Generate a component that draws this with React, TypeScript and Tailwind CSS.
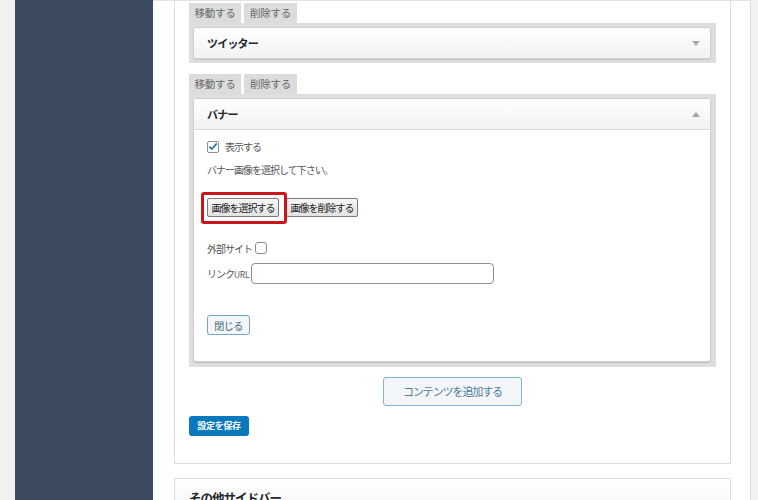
import React from "react";

const font = { fontFamily: '"Noto Sans CJK JP", "Noto Sans", sans-serif' };

function Tabs() {
  return (
    <div className="flex h-[20px] gap-[3px]">
      <div className="w-[52px] bg-[#dcdcdc] text-[10.5px] tracking-[-0.3px] text-[#666] flex items-center justify-center">移動する</div>
      <div className="w-[53px] bg-[#dcdcdc] text-[10.5px] tracking-[-0.3px] text-[#666] flex items-center justify-center">削除する</div>
    </div>
  );
}

function Arrow({ up }: { up?: boolean }) {
  return (
    <svg width="8" height="5" viewBox="0 0 8 5" className="mr-[10px]">
      {up ? <polygon points="0,5 8,5 4,0" fill="#a7a7a7" /> : <polygon points="0,0 8,0 4,5" fill="#a7a7a7" />}
    </svg>
  );
}

export default function App() {
  return (
    <div className="w-[758px] h-[500px] flex overflow-hidden bg-[#f1f1f1]" style={font}>
      <div className="w-[15px] shrink-0" />
      <div className="w-[138px] shrink-0 bg-[#3b4a5f]" />
      <div className="w-[598px] shrink-0 bg-white border-t border-[#e2e2e2] border-r pl-[21px]">
        <div className="w-[557px] border-x border-b border-[#dcdcdc] px-[14px] pt-[2px] pb-[27px] flex flex-col">
          {/* Twitter widget */}
          <Tabs />
          <div className="bg-[#dedede] pt-[4px] pb-[4px] pl-[4px] pr-[5px]">
            <div className="h-[32px] rounded-[3px] border border-[#cfcfcf] bg-gradient-to-b from-white to-[#f2f2f2] shadow-[0_1px_1px_rgba(0,0,0,0.12)] flex items-center justify-between pl-[13px]">
              <span className="text-[11px] tracking-[-0.8px] font-bold text-[#23282d]">ツイッター</span>
              <Arrow />
            </div>
          </div>

          {/* Banner widget */}
          <div className="mt-[11px]">
            <Tabs />
          </div>
          <div className="bg-[#dedede] pt-[4px] pb-[5px] pl-[4px] pr-[5px]">
            <div className="rounded-[3px] border border-[#cfcfcf] bg-white shadow-[0_1px_1px_rgba(0,0,0,0.15)] flex flex-col">
              <div className="h-[31px] bg-gradient-to-b from-white to-[#f2f2f2] border-b border-[#dcdcdc] flex items-center justify-between pl-[13px]">
                <span className="text-[11px] tracking-[-0.8px] font-bold text-[#23282d]">バナー</span>
                <Arrow up />
              </div>
              <div className="px-[13px] pb-[26px] flex flex-col items-start text-[10px] tracking-[-1px] text-[#555]">
                <div className="mt-[10px] h-[13px] flex items-center gap-[6px]">
                  <span className="w-[12px] h-[12px] border border-[#8c8f94] rounded-[2px] bg-white flex items-center justify-center">
                    <svg width="10" height="9" viewBox="0 0 10 9">
                      <path d="M1.3 4.6 L3.8 7.1 L8.8 1.4" stroke="#2271b1" strokeWidth="1.7" fill="none" />
                    </svg>
                  </span>
                  <span>表示する</span>
                </div>
                <div className="mt-[9px] h-[14px] flex items-center">バナー画像を選択して下さい。</div>
                <div className="relative mt-[22px] flex gap-[7px]">
                  <button className="w-[72px] h-[19px] border border-[#7a7a7a] rounded-[2px] bg-gradient-to-b from-[#f6f6f6] to-[#e3e3e3] text-[10px] tracking-[-1px] text-[#222] flex items-center justify-center">画像を選択する</button>
                  <button className="w-[72px] h-[19px] border border-[#7a7a7a] rounded-[2px] bg-gradient-to-b from-[#f6f6f6] to-[#e3e3e3] text-[10px] tracking-[-1px] text-[#222] flex items-center justify-center">画像を削除する</button>
                  <div className="absolute left-[-6px] top-[-6px] w-[86px] h-[32px] border-[3px] border-[#c8161d] rounded-[3px]" />
                </div>
                <div className="mt-[25px] h-[12px] flex items-center gap-[3px]">
                  <span>外部サイト</span>
                  <span className="w-[12px] h-[12px] border border-[#8c8f94] rounded-[3px] bg-white" />
                </div>
                <div className="mt-[9px] flex items-center gap-[2px]">
                  <span>リンク<span className="text-[8.5px] tracking-[-0.3px]">URL</span></span>
                  <div className="w-[243px] h-[21px] border border-[#8c8f94] rounded-[4px] bg-white" />
                </div>
                <button className="mt-[31px] w-[43px] h-[20px] border border-[#6fa8c9] rounded-[3px] bg-[#f3f5f6] text-[10px] tracking-[-0.5px] text-[#3a6582] flex items-center justify-center">閉じる</button>
              </div>
            </div>
          </div>

          <div className="mt-[10px] flex justify-center">
            <button className="w-[139px] h-[29px] border border-[#7fb3d0] rounded-[3px] bg-[#f3f5f6] text-[11px] tracking-[-1.1px] text-[#4a7d9e] flex items-center justify-center">コンテンツを追加する</button>
          </div>
          <div className="mt-[10px]">
            <button className="w-[60px] h-[20px] rounded-[3px] bg-[#0a78bd] text-[9px] tracking-[-0.3px] text-white font-bold flex items-center justify-center">設定を保存</button>
          </div>
        </div>

        <div className="mt-[14px] w-[557px] h-[40px] border border-[#dcdcdc] bg-gradient-to-b from-white to-[#f4f4f4] pl-[14px] pt-[5px]">
          <span className="text-[12.5px] tracking-[-1px] font-bold text-[#23282d]">その他サイドバー</span>
        </div>
      </div>
      <div className="flex-1" />
    </div>
  );
}
